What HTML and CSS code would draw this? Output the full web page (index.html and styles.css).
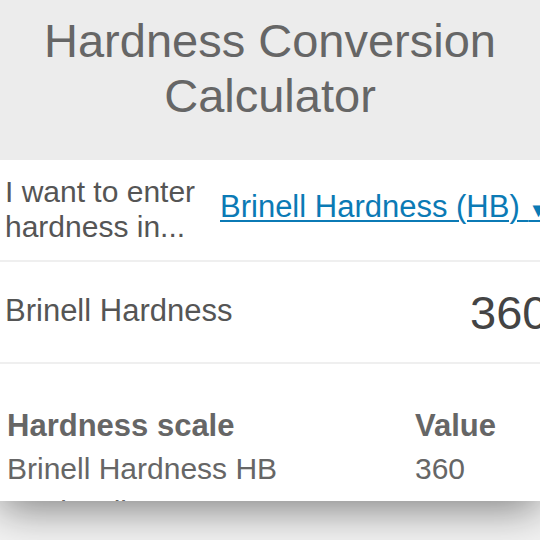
FILE: index.html
```html
<!DOCTYPE html>
<html>
<head>
<meta charset="utf-8">
<link rel="stylesheet" href="styles.css">
</head>
<body>
<div class="page">
  <header class="header">
    <h1 class="title">Hardness Conversion Calculator</h1>
  </header>
  <main class="card">
    <div class="row row-select">
      <div class="label">I want to enter hardness in...</div>
      <a class="select-link" href="#">Brinell Hardness (HB) <span class="caret">▼</span></a>
    </div>
    <div class="row row-input">
      <div class="label-input">Brinell Hardness</div>
      <div class="value-input">360</div>
    </div>
    <table class="results">
      <thead>
        <tr><th class="col-scale">Hardness scale</th><th class="col-value">Value</th></tr>
      </thead>
      <tbody>
        <tr><td>Brinell Hardness HB</td><td>360</td></tr>
        <tr><td>Rockwell C HRC</td><td>39</td></tr>
        <tr><td>Rockwell B HRB</td><td>—</td></tr>
      </tbody>
    </table>
  </main>
</div>
</body>
</html>
```
FILE: styles.css
```css
html, body {
  margin: 0;
  padding: 0;
}
body {
  background: #f3f3f3;
  font-family: "Liberation Sans", Arial, sans-serif;
  width: 540px;
  height: 540px;
  overflow: hidden;
}
.page {
  width: 540px;
}
.header {
  background: #ececec;
  height: 160px;
  padding-top: 13px;
  box-sizing: border-box;
  position: relative;
  z-index: 2;
}
.title {
  margin: 0;
  font-weight: normal;
  font-size: 47px;
  line-height: 55px;
  color: #666;
  text-align: center;
}
.card {
  background: #fff;
  height: 341px;
  overflow: hidden;
  box-shadow: 0 8px 40px rgba(0, 0, 0, 0.48);
  position: relative;
  z-index: 1;
}
.row {
  display: flex;
  align-items: center;
  border-bottom: 2px solid #efefef;
  padding-left: 5px;
  white-space: nowrap;
  box-sizing: border-box;
  height: 102px;
}
.label {
  width: 215px;
  flex: none;
  white-space: normal;
  font-size: 30px;
  line-height: 35px;
  margin-top: -2px;
  color: #555;
}
.select-link {
  font-size: 31px;
  line-height: 36px;
  margin-top: -3px;
  color: #0b7ab5;
  text-decoration: underline;
  text-decoration-thickness: 2px;
  text-underline-offset: 3px;
}
.caret {
  font-size: 20px;
}
.label-input {
  font-size: 31px;
  color: #555;
  width: 465px;
  flex: none;
  margin-top: -2px;
}
.value-input {
  font-size: 47px;
  color: #444;
  flex: none;
}
.results {
  border-collapse: collapse;
  margin-top: 41px;
  margin-left: 3px;
  font-size: 30px;
  color: #666;
}
.results th {
  text-align: left;
  font-weight: bold;
  font-size: 31px;
  padding: 0 4px;
  line-height: 42px;
}
.results td {
  padding: 0 4px;
  line-height: 43px;
}
.col-scale {
  width: 400px;
}
```
